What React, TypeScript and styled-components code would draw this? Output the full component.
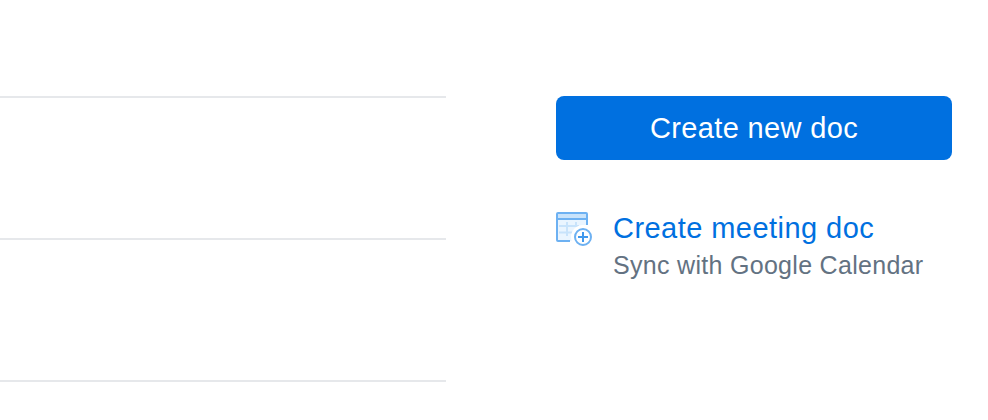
import React from "react";
import styled, { createGlobalStyle } from "styled-components";

const GlobalStyle = createGlobalStyle`
  * { box-sizing: border-box; }
  body { margin: 0; background: #fff; font-family: "Liberation Sans", Arial, sans-serif; }
`;

const Page = styled.main`
  display: flex;
  gap: 110px;
  width: 988px;
  height: 420px;
  padding-top: 96px;
  overflow: hidden;
`;

const DocList = styled.div`
  flex: 0 0 446px;
`;

const DocRow = styled.div`
  height: 142px;
  border-top: 2px solid #e6e8eb;
`;

const Sidebar = styled.aside`
  flex: 0 0 396px;
`;

const PrimaryButton = styled.button`
  display: flex;
  align-items: center;
  justify-content: center;
  width: 100%;
  height: 64px;
  padding: 0;
  border: 0;
  border-radius: 8px;
  background: #0070e0;
  color: #fff;
  font: 400 29px/64px "Liberation Sans", Arial, sans-serif;
  letter-spacing: 0.35px;
`;

const MeetingAction = styled.div`
  display: flex;
  gap: 17px;
  margin-top: 48px;
`;

const CalendarIcon = styled.svg`
  flex: 0 0 40px;
  width: 40px;
  height: 40px;
  margin-top: 4px;
`;

const MeetingText = styled.div`
  display: flex;
  flex-direction: column;
  white-space: nowrap;
`;

const Title = styled.a`
  color: #0070e0;
  font-size: 29px;
  line-height: 40px;
  letter-spacing: 0.45px;
`;

const Subtitle = styled.span`
  color: #637282;
  font-size: 25px;
  line-height: 34px;
  letter-spacing: 0.3px;
`;

export default function App() {
  return (
    <>
      <GlobalStyle />
      <Page>
        <DocList>
          <DocRow />
          <DocRow />
          <DocRow />
        </DocList>
        <Sidebar>
          <PrimaryButton>Create new doc</PrimaryButton>
          <MeetingAction>
            <CalendarIcon viewBox="0 0 40 40" fill="none">
              <path d="M1 1h30v28H1z" fill="#eaf5ff" />
              <path d="M1 2h30v5H1z" fill="#c8e3fb" />
              <path d="M3 14h20M3 20.5h14M11 10v14M20 10v5" stroke="#c8e3fb" strokeWidth="2" />
              <path d="M14 29H2a1 1 0 0 1-1-1V2a1 1 0 0 1 1-1h28a1 1 0 0 1 1 1v11M1 7h30" stroke="#6db1f2" strokeWidth="2" />
              <path d="M27 13a12 12 0 0 0-12 12c0 2 .5 4 1.5 6H34V13z" fill="#fff" />
              <circle cx="27" cy="25" r="8" stroke="#6db1f2" strokeWidth="2" />
              <path d="M27 20v10M22 25h10" stroke="#3f98ed" strokeWidth="2" />
            </CalendarIcon>
            <MeetingText>
              <Title>Create meeting doc</Title>
              <Subtitle>Sync with Google Calendar</Subtitle>
            </MeetingText>
          </MeetingAction>
        </Sidebar>
      </Page>
    </>
  );
}
